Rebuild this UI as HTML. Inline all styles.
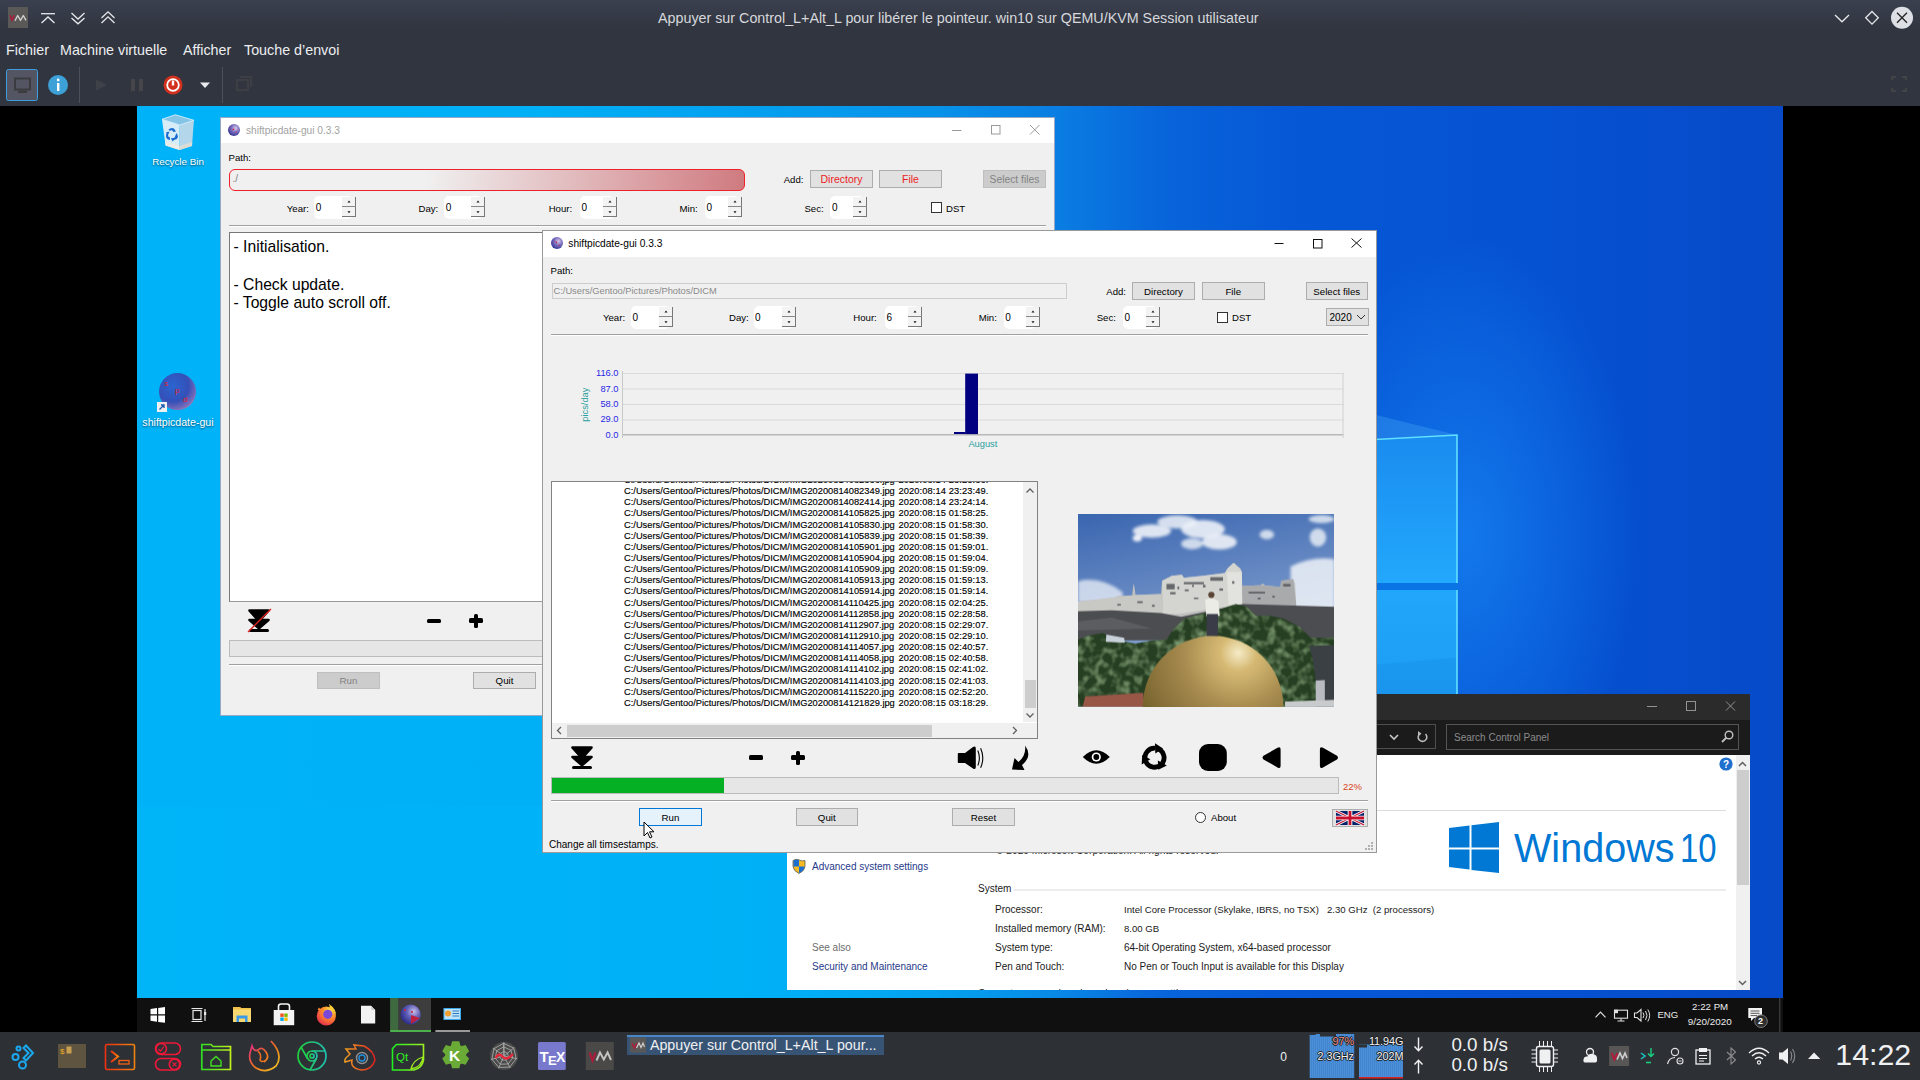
<!DOCTYPE html>
<html><head><meta charset="utf-8">
<style>
*{margin:0;padding:0;box-sizing:border-box}
html,body{width:1920px;height:1080px;overflow:hidden;background:#000;font-family:"Liberation Sans",sans-serif}
.a{position:absolute}
.t{position:absolute;white-space:nowrap;line-height:1}
svg{position:absolute;overflow:visible}
/* top chrome */
#titlebar{left:0;top:0;width:1920px;height:35px;background:linear-gradient(#3b4050 0px,#31353f 28px,#31353f 35px)}
#menubar{left:0;top:35px;width:1920px;height:30px;background:#31353f}
#toolbar{left:0;top:65px;width:1920px;height:41px;background:#31353f}
/* desktop */
#desk{left:137px;top:106px;width:1646px;height:892px;overflow:hidden;background:#0a66d8}
#wintb{left:137px;top:998px;width:1646px;height:34px;background:#101010}
#kde{left:0;top:1032px;width:1920px;height:48px;background:#2d3136}
.win{position:absolute;background:#f0f0f0;overflow:hidden}
.wt{font-family:"Liberation Sans",sans-serif;font-size:11px;color:#000}
.btn{position:absolute;background:#e1e1e1;border:1px solid #adadad;font-size:11px;text-align:center;color:#000}
.spin{position:absolute;background:#fff}
</style></head><body>

<!-- ============ TOP CHROME ============ -->
<div id="titlebar" class="a"></div>
<div id="menubar" class="a"></div>
<div id="toolbar" class="a"></div>
<div class="t" style="left:658px;top:10.5px;font-size:14.3px;color:#d6d8dc">Appuyer sur Control_L+Alt_L pour libérer le pointeur. win10 sur QEMU/KVM Session utilisateur</div>
<svg class="a" style="left:0;top:0" width="1920" height="106" viewBox="0 0 1920 106">
 <rect x="8" y="7" width="20" height="21" fill="#5b5957"/>
 <path d="M10.2 15.2 L12.1 20.8 L14 15.2" stroke="#a81c3c" stroke-width="1.6" stroke-linejoin="round" fill="none"/>
 <path d="M15 20.8 L17.7 15.5 L20.5 20.4 L23.3 15.5 L26 20.4" stroke="#cfcfcf" stroke-width="1.4" stroke-linejoin="round" fill="none"/>
 <g stroke="#e6e8ea" stroke-width="1.3" fill="none">
  <path d="M41 13.7 H55"/><path d="M41.5 23 L48 17 L54.5 23"/>
  <path d="M71.5 13 L78 19 L84.5 13"/><path d="M71.5 18 L78 23.8 L84.5 18"/>
  <path d="M101.5 18 L108 11.8 L114.5 18"/><path d="M101.5 23 L108 16.8 L114.5 23"/>
  <path d="M1835 15 L1842 21.8 L1849 15"/>
  <path d="M1872 11.5 L1878.3 17.8 L1872 24.1 L1865.7 17.8 Z"/>
 </g>
 <circle cx="1902" cy="17.8" r="11" fill="#dcdfe4"/>
 <path d="M1897 12.8 L1907 22.8 M1907 12.8 L1897 22.8" stroke="#222" stroke-width="1.3"/>
 <!-- toolbar -->
 <rect x="6.5" y="69.5" width="31" height="31" rx="2" fill="#535662" stroke="#3d9fe0" stroke-width="1"/>
 <rect x="15" y="78.5" width="15" height="11" fill="none" stroke="#3b3c40" stroke-width="2"/>
 <rect x="18" y="90.5" width="9" height="2.5" fill="#3b3c40"/>
 <circle cx="58" cy="85" r="10" fill="#3da1d8"/>
 <rect x="57" y="83" width="2.4" height="8" fill="#fff"/><circle cx="58.2" cy="80" r="1.4" fill="#fff"/>
 <rect x="79" y="67" width="1" height="36" fill="#4b5059"/>
 <path d="M96 79.5 L107 85 L96 90.5Z" fill="#3e4147"/>
 <rect x="131" y="79" width="4" height="12" fill="#46464a"/><rect x="139" y="79" width="4" height="12" fill="#46464a"/>
 <circle cx="173" cy="85" r="9.5" fill="#d2311f"/>
 <circle cx="173" cy="85" r="5.8" fill="none" stroke="#fff" stroke-width="1.8"/>
 <rect x="171.8" y="80.5" width="2.4" height="5" fill="#fff"/>
 <path d="M200 82.5 H210 L205 88Z" fill="#e8eaed"/>
 <rect x="222" y="67" width="1" height="36" fill="#4b5059"/>
 <rect x="237" y="80" width="11" height="10" fill="none" stroke="#3d3f45" stroke-width="2"/>
 <path d="M240 77 H251 V87" fill="none" stroke="#3d3f45" stroke-width="2"/>
 <path d="M1892 80 V77 H1896 M1902 77 H1906 V80 M1906 88 V91 H1902 M1896 91 H1892 V88" fill="none" stroke="#4a4a48" stroke-width="1.5"/>
</svg>
<div class="t" style="left:6px;top:43px;font-size:14.3px;color:#eceef0">Fichier</div>
<div class="t" style="left:60px;top:43px;font-size:14.3px;color:#eceef0">Machine virtuelle</div>
<div class="t" style="left:183px;top:43px;font-size:14.3px;color:#eceef0">Afficher</div>
<div class="t" style="left:244px;top:43px;font-size:14.3px;color:#eceef0">Touche d’envoi</div>

<!-- ============ DESKTOP ============ -->
<div id="desk" class="a">
 <div class="a" style="left:0;top:0;width:1646px;height:892px;background:linear-gradient(90deg,#00b3f8 0px,#00b0f6 400px,#0892ea 800px,#0a7ee2 917px,#0864da 1030px,#0658d6 1150px,#0552d2 1400px,#064ac8 1646px)"></div>
 <div class="a" style="left:0;top:0;width:1646px;height:892px;background:radial-gradient(ellipse 170px 300px at 1330px 430px,rgba(30,150,255,.55),rgba(30,150,255,0) 100%)"></div>
 <div class="a" style="left:0;top:700px;width:1000px;height:192px;background:linear-gradient(90deg,#00b4f8,#00b1f6 60%,rgba(0,177,246,0))"></div>
 <svg width="1646" height="892" style="left:0;top:0">
  <defs>
   <linearGradient id="pane1" x1="0" y1="0" x2="0" y2="1"><stop offset="0" stop-color="#1a8cf0"/><stop offset="1" stop-color="#22a8fc"/></linearGradient>
   <linearGradient id="pane2" x1="0" y1="0" x2="0" y2="1"><stop offset="0" stop-color="#20a6fa"/><stop offset="1" stop-color="#1c9cf4"/></linearGradient>
  </defs>
  <path d="M1000 250 L1320 329 L1240 340Z" fill="rgba(90,190,255,.25)"/>
  <path d="M1100 341 L1320 329 L1320 477 L1100 477Z" fill="url(#pane1)"/>
  <rect x="1100" y="477" width="220" height="7" fill="#0a74e4"/>
  <path d="M1100 484 L1320 484 L1320 600 L1100 600Z" fill="url(#pane2)"/>
  <path d="M1100 570 L1320 552 L1320 600 L1100 600Z" fill="rgba(0,60,160,.08)"/>
  <path d="M1100 341 L1320 329 L1320 477" fill="none" stroke="#60e0ff" stroke-width="1.6"/>
  <path d="M1320 484 L1320 600" fill="none" stroke="#60e0ff" stroke-width="1.6"/>
 </svg>
</div>

<!--DI-->
<svg class="a" style="left:150px;top:110px" width="60" height="44" viewBox="150 110 60 44"><path d="M162 119.3 L179.7 125 L179.5 150.1 L165.6 145.4Z" fill="#d6ecf6"/><path d="M179.7 125 L193.9 120.3 L192 145.9 L179.5 150.1Z" fill="#b4d6ea"/><path d="M162 119.3 L175.4 114.8 L193.9 120.3 L179.7 125Z" fill="#86c4e6" stroke="#e4f4fc" stroke-width=".8"/><path d="M165 141 L179.5 146 L179.5 150.1 L165.6 145.4Z" fill="#ecebe6"/><path d="M179.5 146 L192.2 142 L192 145.9 L179.5 150.1Z" fill="#dcdcd6"/><g fill="#1a6cd0"><path d="M168.5 129.5 Q171 127 174 128.5 L176 131.5 L173.5 132 L172 130.3 Q170.5 129.8 169.8 131Z"/><path d="M166.5 132 L169.5 131.8 L168 135 Q168 137 170 137.5 L170 140 Q166 139.5 166 136Z"/><path d="M176.8 133 L178 136.5 Q177.5 139.5 174 140 L172.5 141.5 L171 138.3 L173.5 138 Q175.5 137.5 175.3 135.5Z"/></g></svg>
<div class="t" style="left:140px;width:76px;text-align:center;top:157.3px;font-size:9.8px;color:#fff;text-shadow:0 1px 2px rgba(0,0,0,.6)">Recycle Bin</div>
<svg class="a" style="left:155px;top:370px" width="46" height="46" viewBox="155 370 46 46"><defs><radialGradient id="dsg" cx=".38" cy=".35" r=".85"><stop offset="0" stop-color="#2c64d0"/><stop offset=".5" stop-color="#3450b8"/><stop offset=".75" stop-color="#7a6cb8"/><stop offset="1" stop-color="#d8a8d8"/></radialGradient></defs><circle cx="177.5" cy="391.6" r="18.5" fill="url(#dsg)"/><text x="164.5" y="386" font-family="Liberation Sans" font-size="7" fill="#e82020">s</text><text x="175" y="393" font-family="Liberation Sans" font-size="8" fill="#e82020">p</text><text x="183" y="402" font-family="Liberation Sans" font-size="8" fill="#e82020">d</text><rect x="157" y="402" width="10" height="10" fill="#f0f0f0"/><path d="M159.5 409.5 L164 405 M161 405 H164 V408" fill="none" stroke="#1a5ab0" stroke-width="1.3"/></svg>
<div class="t" style="left:130px;width:96px;text-align:center;top:417.0px;font-size:10.6px;color:#fff;text-shadow:0 1px 2px rgba(0,0,0,.6)">shiftpicdate-gui</div>
<!--/DI-->
<!-- ============ CONTROL PANEL ============ -->
<div class="a" style="left:787px;top:694px;width:963px;height:296px;background:#fff;overflow:hidden">
 <div class="a" style="left:0;top:0;width:963px;height:26px;background:#2b2b2b"></div>
 <div class="a" style="left:0;top:26px;width:963px;height:35px;background:#1b1b1b"></div>
 <div class="a" style="left:-1px;top:30px;width:650px;height:25px;border:1px solid #4e4e4e"></div>
 <div class="a" style="left:659px;top:30px;width:293px;height:26px;border:1px solid #555"></div>
 <div class="t" style="left:667px;top:38.5px;font-size:10px;color:#8c8c8c">Search Control Panel</div>
 <svg width="963" height="296" style="left:0;top:0">
  <g stroke="#929292" stroke-width="1" fill="none">
   <path d="M860 12.5 H870"/>
   <rect x="899.5" y="7.5" width="9" height="9"/>
   <path d="M939 7.5 L948 16.5 M948 7.5 L939 16.5"/>
  </g>
  <path d="M603 41 L607 45 L611 41" stroke="#c8c8c8" stroke-width="1.6" fill="none"/>
  <path d="M638.5 40 A4.3 4.3 0 1 1 633 39.6" stroke="#bcbcbc" stroke-width="1.6" fill="none"/>
  <path d="M631 37 L634.5 39.8 L631 42" fill="#bcbcbc"/>
  <circle cx="942" cy="41" r="3.8" stroke="#c0c0c0" stroke-width="1.4" fill="none"/>
  <path d="M939.5 43.5 L935 48" stroke="#c0c0c0" stroke-width="1.8"/>
  <circle cx="939" cy="70" r="6.6" fill="#1f6fcf"/>
  <text x="939" y="74" font-family="Liberation Sans" font-weight="bold" font-size="10" fill="#fff" text-anchor="middle">?</text>
  <rect x="949" y="61" width="14" height="235" fill="#f0f0f0"/>
  <rect x="950" y="76" width="12" height="115" fill="#cdcdcd"/>
  <path d="M952 72 L955.5 68.5 L959 72" stroke="#606060" stroke-width="1.5" fill="none"/>
  <path d="M952 287 L955.5 290.5 L959 287" stroke="#606060" stroke-width="1.5" fill="none"/>
  <rect x="0" y="116" width="939" height="1" fill="#dcdcdc"/>
  <rect x="227" y="195.5" width="712" height="1" fill="#dcdcdc"/>
  <!-- windows logo -->
  <path d="M662 134 L682.5 131.6 L682.5 153.4 L662 153.4Z M684.5 131.3 L712 128 L712 153.4 L684.5 153.4Z M662 155.4 L682.5 155.4 L682.5 175.6 L662 173Z M684.5 155.4 L712 155.4 L712 179 L684.5 175.9Z" fill="#0078d4"/>
  <!-- shield -->
  <g transform="translate(-6,0)"><path d="M12 166.5 Q15 164.5 18.5 166 Q21 167.5 24 166.5 L24 172.5 Q23.5 177 18 179.5 Q12.5 177 12 172.5Z" fill="#f6bb22" stroke="#5a5a5a" stroke-width=".8"/>
  <path d="M18 166 Q15 164.8 12.4 166.4 L12.4 172.5 L18 172.5Z M18 172.5 L23.6 172.5 Q23.2 176.8 18 179.2Z" fill="#1c6fd0"/></g>
 </svg>
 <div class="t" style="left:727px;top:134px;font-size:41px;color:#0078d4;transform:scaleX(.965);transform-origin:0 0">Windows</div><div class="t" style="left:893px;top:134px;font-size:41px;color:#0078d4;transform:scaleX(.8);transform-origin:0 0">10</div>
 <div class="t" style="left:209px;top:151.5px;font-size:10.2px;color:#222">© 2020 Microsoft Corporation. All rights reserved.</div>
 <div class="t" style="left:25px;top:168px;font-size:10px;color:#1f3a8a">Advanced system settings</div>
 <div class="t" style="left:191px;top:189.5px;font-size:10px;color:#1a1a1a">System</div>
 <div class="t" style="left:208px;top:211px;font-size:10px;color:#1a1a1a">Processor:</div>
 <div class="t" style="left:208px;top:230px;font-size:10px;color:#1a1a1a">Installed memory (RAM):</div>
 <div class="t" style="left:208px;top:248.5px;font-size:10px;color:#1a1a1a">System type:</div>
 <div class="t" style="left:208px;top:267.5px;font-size:10px;color:#1a1a1a">Pen and Touch:</div>
 <div class="t" style="left:337px;top:211px;font-size:9.6px;color:#1a1a1a">Intel Core Processor (Skylake, IBRS, no TSX) &nbsp; 2.30 GHz &nbsp;(2 processors)</div>
 <div class="t" style="left:337px;top:230px;font-size:9.6px;color:#1a1a1a">8.00 GB</div>
 <div class="t" style="left:337px;top:248.5px;font-size:10px;color:#1a1a1a">64-bit Operating System, x64-based processor</div>
 <div class="t" style="left:337px;top:267.5px;font-size:10px;color:#1a1a1a">No Pen or Touch Input is available for this Display</div>
 <div class="t" style="left:25px;top:248.5px;font-size:10px;color:#6d6d6d">See also</div>
 <div class="t" style="left:25px;top:267.5px;font-size:10px;color:#1f3a8a">Security and Maintenance</div>
 <div class="t" style="left:191px;top:295px;font-size:10px;color:#1a1a1a">Computer name, domain and workgroup settings</div>
</div>

<!-- ============ WINDOW 1 ============ -->
<!--W1-->
<div class="a" style="left:220px;top:117px;width:835px;height:599px;background:#f0f0f0;border:1px solid rgba(40,80,140,.45);overflow:hidden">
</div>
<div class="a" style="left:221px;top:118px;width:833px;height:25px;background:#fff"></div>
<svg class="a" style="left:227.4px;top:122.80000000000001px" width="14" height="14" viewBox="-7 -7 14 14"><defs><radialGradient id="sg234" cx="0.62" cy="0.35" r="0.75"><stop offset="0" stop-color="#d8c8e8"/><stop offset=".45" stop-color="#7a70c0"/><stop offset="1" stop-color="#2a2a8a"/></radialGradient></defs><circle r="6" fill="url(#sg234)"/><circle cx="-0.6000000000000001" cy="-0.6000000000000001" r="0.78" fill="#d02040"/><circle cx="2.0999999999999996" cy="2.0999999999999996" r="0.66" fill="#d02040"/><circle cx="-2.7" cy="-2.0999999999999996" r="0.48" fill="#d02040"/></svg>
<div class="t" style="left:246.0px;top:126.1px;font-size:10.2px;color:#a2a2a2;">shiftpicdate-gui 0.3.3</div>
<svg class="a" style="left:940px;top:118px" width="114" height="25"><g stroke="#9a9a9a" stroke-width="1" fill="none"><path d="M12 12.5 H21.5"/><rect x="51.5" y="7.5" width="8.5" height="8.5"/><path d="M90 7 L99.5 16.5 M99.5 7 L90 16.5"/></g></svg>
<div class="t" style="left:228.5px;top:152.7px;font-size:9.6px;color:#000;">Path:</div>
<div class="a" style="left:229px;top:168.5px;width:516px;height:22px;border:1px solid #f0202a;border-radius:6px;background:linear-gradient(95deg,#f0f0f0 0%,#f0f0f0 38%,#e4c4c6 62%,#d8979b 85%,#cf7b80 100%)"></div>
<div class="t" style="left:232.5px;top:174.0px;font-size:10px;color:#808080;">./</div>
<div class="t" style="left:783.7px;top:174.9px;font-size:9.6px;color:#000;">Add:</div>
<div class="a" style="left:810px;top:170px;width:63px;height:18px;background:#e1e1e1;border:1px solid #adadad"></div>
<div class="t" style="left:810px;width:63px;text-align:center;top:174.3px;font-size:10.5px;color:#ec1c24">Directory</div>
<div class="a" style="left:879px;top:170px;width:63px;height:18px;background:#e1e1e1;border:1px solid #adadad"></div>
<div class="t" style="left:879px;width:63px;text-align:center;top:174.3px;font-size:10.5px;color:#ec1c24">File</div>
<div class="a" style="left:983px;top:170px;width:63px;height:18px;background:#cccccc;border:1px solid #bfbfbf"></div>
<div class="t" style="left:983px;width:63px;text-align:center;top:174.5px;font-size:10.3px;color:#838383">Select files</div>
<div class="t" style="left:286.8px;top:203.9px;font-size:9.6px;color:#000;">Year:</div>
<div class="a" style="left:314.3px;top:196.3px;width:38.69999999999999px;height:22.5px;background:#fff;border-radius:5px"></div>
<div class="a" style="left:342px;top:197.3px;width:14px;height:20px;background:#f3f3f3;border-right:1px solid #777;"></div>
<div class="a" style="left:342px;top:206.3px;width:14px;height:1px;background:#888"></div>
<div class="a" style="left:342px;top:216.3px;width:14px;height:1px;background:#777"></div>
<svg class="a" style="left:342px;top:196.3px" width="14" height="22"><path d="M5.5 6.5 L7 4.6 L8.5 6.5Z M5.5 15.3 L7 17.2 L8.5 15.3Z" fill="#111"/></svg>
<div class="t" style="left:315.8px;top:203.1px;font-size:10px;color:#000;">0</div>
<div class="t" style="left:418.5px;top:203.9px;font-size:9.6px;color:#000;">Day:</div>
<div class="a" style="left:444.3px;top:196.3px;width:37.69999999999999px;height:22.5px;background:#fff;border-radius:5px"></div>
<div class="a" style="left:471px;top:197.3px;width:14px;height:20px;background:#f3f3f3;border-right:1px solid #777;"></div>
<div class="a" style="left:471px;top:206.3px;width:14px;height:1px;background:#888"></div>
<div class="a" style="left:471px;top:216.3px;width:14px;height:1px;background:#777"></div>
<svg class="a" style="left:471px;top:196.3px" width="14" height="22"><path d="M5.5 6.5 L7 4.6 L8.5 6.5Z M5.5 15.3 L7 17.2 L8.5 15.3Z" fill="#111"/></svg>
<div class="t" style="left:445.8px;top:203.1px;font-size:10px;color:#000;">0</div>
<div class="t" style="left:548.7px;top:203.9px;font-size:9.6px;color:#000;">Hour:</div>
<div class="a" style="left:580px;top:196.3px;width:34px;height:22.5px;background:#fff;border-radius:5px"></div>
<div class="a" style="left:603px;top:197.3px;width:14px;height:20px;background:#f3f3f3;border-right:1px solid #777;"></div>
<div class="a" style="left:603px;top:206.3px;width:14px;height:1px;background:#888"></div>
<div class="a" style="left:603px;top:216.3px;width:14px;height:1px;background:#777"></div>
<svg class="a" style="left:603px;top:196.3px" width="14" height="22"><path d="M5.5 6.5 L7 4.6 L8.5 6.5Z M5.5 15.3 L7 17.2 L8.5 15.3Z" fill="#111"/></svg>
<div class="t" style="left:581.5px;top:203.1px;font-size:10px;color:#000;">0</div>
<div class="t" style="left:679.6px;top:203.9px;font-size:9.6px;color:#000;">Min:</div>
<div class="a" style="left:705px;top:196.3px;width:34px;height:22.5px;background:#fff;border-radius:5px"></div>
<div class="a" style="left:728px;top:197.3px;width:14px;height:20px;background:#f3f3f3;border-right:1px solid #777;"></div>
<div class="a" style="left:728px;top:206.3px;width:14px;height:1px;background:#888"></div>
<div class="a" style="left:728px;top:216.3px;width:14px;height:1px;background:#777"></div>
<svg class="a" style="left:728px;top:196.3px" width="14" height="22"><path d="M5.5 6.5 L7 4.6 L8.5 6.5Z M5.5 15.3 L7 17.2 L8.5 15.3Z" fill="#111"/></svg>
<div class="t" style="left:706.5px;top:203.1px;font-size:10px;color:#000;">0</div>
<div class="t" style="left:804.4px;top:203.9px;font-size:9.6px;color:#000;">Sec:</div>
<div class="a" style="left:830.4px;top:196.3px;width:33.60000000000002px;height:22.5px;background:#fff;border-radius:5px"></div>
<div class="a" style="left:853px;top:197.3px;width:14px;height:20px;background:#f3f3f3;border-right:1px solid #777;"></div>
<div class="a" style="left:853px;top:206.3px;width:14px;height:1px;background:#888"></div>
<div class="a" style="left:853px;top:216.3px;width:14px;height:1px;background:#777"></div>
<svg class="a" style="left:853px;top:196.3px" width="14" height="22"><path d="M5.5 6.5 L7 4.6 L8.5 6.5Z M5.5 15.3 L7 17.2 L8.5 15.3Z" fill="#111"/></svg>
<div class="t" style="left:831.9px;top:203.1px;font-size:10px;color:#000;">0</div>
<div class="a" style="left:931px;top:202px;width:11px;height:11px;background:#fff;border:1px solid #333"></div>
<div class="t" style="left:946.0px;top:203.9px;font-size:9.6px;color:#000;">DST</div>
<div class="a" style="left:229px;top:225px;width:817px;height:1px;background:#a0a0a0"></div><div class="a" style="left:229px;top:226px;width:817px;height:1px;background:#fff"></div>
<div class="a" style="left:229px;top:232px;width:817px;height:370px;background:#fff;border-top:1px solid #777;border-left:1px solid #777;border-bottom:1px solid #999"></div>
<div class="t" style="left:233.5px;top:239.0px;font-size:15.7px;color:#000;">- Initialisation.</div>
<div class="t" style="left:233.5px;top:276.7px;font-size:15.7px;color:#000;">- Check update.</div>
<div class="t" style="left:233.5px;top:295.0px;font-size:15.7px;color:#000;">- Toggle auto scroll off.</div>
<svg class="a" style="left:248px;top:608.5px" width="24" height="24" viewBox="0 0 24 24"><path d="M1.5 1 Q0.5 1 1.2 2 L11 13 L20.8 2 Q21.5 1 20.5 1Z" fill="#000" stroke="#000" stroke-width="1.5" stroke-linejoin="round"/><path d="M1.5 10.5 Q0.5 10.5 1.2 11.5 L11 20 L20.8 11.5 Q21.5 10.5 20.5 10.5Z" fill="#000" stroke="#000" stroke-width="1.5" stroke-linejoin="round"/><rect x="1" y="20" width="20" height="3" rx="1.5" fill="#000"/><path d="M0 23 L23 0" stroke="#e02020" stroke-width="1.3"/></svg>
<div class="a" style="left:426.5px;top:618.5px;width:14px;height:4.5px;background:#000;border-radius:1.5px"></div>
<div class="a" style="left:468.7px;top:618.3px;width:14px;height:4.3px;background:#000;border-radius:1.5px"></div><div class="a" style="left:473.5px;top:613.5px;width:4.3px;height:14px;background:#000;border-radius:1.5px"></div>
<div class="a" style="left:229px;top:639.5px;width:817px;height:17.5px;background:#e6e6e6;border:1px solid #bcbcbc"></div>
<div class="a" style="left:229px;top:663.5px;width:817px;height:1px;background:#a0a0a0"></div><div class="a" style="left:229px;top:664.5px;width:817px;height:1px;background:#fff"></div>
<div class="a" style="left:317px;top:671.5px;width:63px;height:17.5px;background:#cccccc;border:1px solid #bfbfbf"></div>
<div class="t" style="left:317px;width:63px;text-align:center;top:676.2px;font-size:9.7px;color:#838383">Run</div>
<div class="a" style="left:473px;top:671.5px;width:63px;height:17.5px;background:#e1e1e1;border:1px solid #adadad"></div>
<div class="t" style="left:473px;width:63px;text-align:center;top:676.2px;font-size:9.7px;color:#000">Quit</div>
<!--/W1-->
<!-- ============ WINDOW 2 ============ -->
<!--W2-->
<div class="a" style="left:542px;top:230px;width:835px;height:623px;background:#f0f0f0;border:1px solid #9a9a9a"></div>
<div class="a" style="left:543px;top:231px;width:833px;height:26px;background:#fff"></div>
<svg class="a" style="left:549.8px;top:235.8px" width="14" height="14" viewBox="-7 -7 14 14"><defs><radialGradient id="sg556" cx="0.62" cy="0.35" r="0.75"><stop offset="0" stop-color="#d8c8e8"/><stop offset=".45" stop-color="#7a70c0"/><stop offset="1" stop-color="#2a2a8a"/></radialGradient></defs><circle r="6" fill="url(#sg556)"/><circle cx="-0.6000000000000001" cy="-0.6000000000000001" r="0.78" fill="#d02040"/><circle cx="2.0999999999999996" cy="2.0999999999999996" r="0.66" fill="#d02040"/><circle cx="-2.7" cy="-2.0999999999999996" r="0.48" fill="#d02040"/></svg>
<div class="t" style="left:568.3px;top:238.9px;font-size:10.2px;color:#000;">shiftpicdate-gui 0.3.3</div>
<svg class="a" style="left:1260px;top:231px" width="116" height="26"><g stroke="#111" stroke-width="1" fill="none"><path d="M14.5 12.5 H23.5"/><rect x="53.5" y="8.5" width="8.5" height="8.5"/><path d="M91.5 7.5 L101.5 16.5 M101.5 7.5 L91.5 16.5"/></g></svg>
<div class="t" style="left:550.5px;top:265.6px;font-size:9.6px;color:#000;">Path:</div>
<div class="a" style="left:551.5px;top:283px;width:515px;height:15.5px;background:#f0f0f0;border:1px solid #cdcdcd"></div>
<div class="t" style="left:553.5px;top:286.9px;font-size:9.3px;color:#8a8a8a;">C:/Users/Gentoo/Pictures/Photos/DICM</div>
<div class="t" style="left:1106.3px;top:286.6px;font-size:9.6px;color:#000;">Add:</div>
<div class="a" style="left:1132px;top:282.2px;width:63px;height:17.80000000000001px;background:#e1e1e1;border:1px solid #adadad"></div>
<div class="t" style="left:1132px;width:63px;text-align:center;top:287.1px;font-size:9.7px;color:#000">Directory</div>
<div class="a" style="left:1202px;top:282.2px;width:62.5px;height:17.80000000000001px;background:#e1e1e1;border:1px solid #adadad"></div>
<div class="t" style="left:1202px;width:62.5px;text-align:center;top:287.1px;font-size:9.7px;color:#000">File</div>
<div class="a" style="left:1305.5px;top:282.2px;width:62.5px;height:17.80000000000001px;background:#e1e1e1;border:1px solid #adadad"></div>
<div class="t" style="left:1305.5px;width:62.5px;text-align:center;top:287.1px;font-size:9.7px;color:#000">Select files</div>
<div class="t" style="left:603.0px;top:313.3px;font-size:9.6px;color:#000;">Year:</div>
<div class="a" style="left:631px;top:306.3px;width:38.5px;height:22.5px;background:#fff;border-radius:5px"></div>
<div class="a" style="left:658.5px;top:307.3px;width:14px;height:20px;background:#f3f3f3;border-right:1px solid #777;"></div>
<div class="a" style="left:658.5px;top:316.3px;width:14px;height:1px;background:#888"></div>
<div class="a" style="left:658.5px;top:326.3px;width:14px;height:1px;background:#777"></div>
<svg class="a" style="left:658.5px;top:306.3px" width="14" height="22"><path d="M5.5 6.5 L7 4.6 L8.5 6.5Z M5.5 15.3 L7 17.2 L8.5 15.3Z" fill="#111"/></svg>
<div class="t" style="left:632.5px;top:313.1px;font-size:10px;color:#000;">0</div>
<div class="t" style="left:729.0px;top:313.3px;font-size:9.6px;color:#000;">Day:</div>
<div class="a" style="left:753.5px;top:306.3px;width:39.5px;height:22.5px;background:#fff;border-radius:5px"></div>
<div class="a" style="left:782px;top:307.3px;width:14px;height:20px;background:#f3f3f3;border-right:1px solid #777;"></div>
<div class="a" style="left:782px;top:316.3px;width:14px;height:1px;background:#888"></div>
<div class="a" style="left:782px;top:326.3px;width:14px;height:1px;background:#777"></div>
<svg class="a" style="left:782px;top:306.3px" width="14" height="22"><path d="M5.5 6.5 L7 4.6 L8.5 6.5Z M5.5 15.3 L7 17.2 L8.5 15.3Z" fill="#111"/></svg>
<div class="t" style="left:755.0px;top:313.1px;font-size:10px;color:#000;">0</div>
<div class="t" style="left:853.3px;top:313.3px;font-size:9.6px;color:#000;">Hour:</div>
<div class="a" style="left:885px;top:306.3px;width:33.5px;height:22.5px;background:#fff;border-radius:5px"></div>
<div class="a" style="left:907.5px;top:307.3px;width:14px;height:20px;background:#f3f3f3;border-right:1px solid #777;"></div>
<div class="a" style="left:907.5px;top:316.3px;width:14px;height:1px;background:#888"></div>
<div class="a" style="left:907.5px;top:326.3px;width:14px;height:1px;background:#777"></div>
<svg class="a" style="left:907.5px;top:306.3px" width="14" height="22"><path d="M5.5 6.5 L7 4.6 L8.5 6.5Z M5.5 15.3 L7 17.2 L8.5 15.3Z" fill="#111"/></svg>
<div class="t" style="left:886.5px;top:313.1px;font-size:10px;color:#000;">6</div>
<div class="t" style="left:978.7px;top:313.3px;font-size:9.6px;color:#000;">Min:</div>
<div class="a" style="left:1003.8px;top:306.3px;width:32.700000000000045px;height:22.5px;background:#fff;border-radius:5px"></div>
<div class="a" style="left:1025.5px;top:307.3px;width:14px;height:20px;background:#f3f3f3;border-right:1px solid #777;"></div>
<div class="a" style="left:1025.5px;top:316.3px;width:14px;height:1px;background:#888"></div>
<div class="a" style="left:1025.5px;top:326.3px;width:14px;height:1px;background:#777"></div>
<svg class="a" style="left:1025.5px;top:306.3px" width="14" height="22"><path d="M5.5 6.5 L7 4.6 L8.5 6.5Z M5.5 15.3 L7 17.2 L8.5 15.3Z" fill="#111"/></svg>
<div class="t" style="left:1005.3px;top:313.1px;font-size:10px;color:#000;">0</div>
<div class="t" style="left:1096.7px;top:313.3px;font-size:9.6px;color:#000;">Sec:</div>
<div class="a" style="left:1123px;top:306.3px;width:33.5px;height:22.5px;background:#fff;border-radius:5px"></div>
<div class="a" style="left:1145.5px;top:307.3px;width:14px;height:20px;background:#f3f3f3;border-right:1px solid #777;"></div>
<div class="a" style="left:1145.5px;top:316.3px;width:14px;height:1px;background:#888"></div>
<div class="a" style="left:1145.5px;top:326.3px;width:14px;height:1px;background:#777"></div>
<svg class="a" style="left:1145.5px;top:306.3px" width="14" height="22"><path d="M5.5 6.5 L7 4.6 L8.5 6.5Z M5.5 15.3 L7 17.2 L8.5 15.3Z" fill="#111"/></svg>
<div class="t" style="left:1124.5px;top:313.1px;font-size:10px;color:#000;">0</div>
<div class="a" style="left:1217px;top:312px;width:11px;height:11px;background:#fff;border:1px solid #333"></div>
<div class="t" style="left:1232.0px;top:313.3px;font-size:9.6px;color:#000;">DST</div>
<div class="a" style="left:1326px;top:308px;width:42.5px;height:17.5px;background:#e1e1e1;border:1px solid #adadad"></div>
<div class="t" style="left:1329.5px;top:312.5px;font-size:10px;color:#000;">2020</div>
<svg class="a" style="left:1355px;top:312px" width="12" height="10"><path d="M2 3 L6 7 L10 3" stroke="#333" stroke-width="1" fill="none"/></svg>
<div class="a" style="left:551px;top:334px;width:817px;height:1px;background:#a0a0a0"></div><div class="a" style="left:551px;top:335px;width:817px;height:1px;background:#fff"></div>
<svg class="a" style="left:540px;top:360px" width="820" height="100" viewBox="540 360 820 100"><rect x="623" y="373.0" width="720.5" height="1" fill="#dadada"/><rect x="623" y="388.5" width="720.5" height="1" fill="#dadada"/><rect x="623" y="404.0" width="720.5" height="1" fill="#dadada"/><rect x="623" y="419.5" width="720.5" height="1" fill="#dadada"/><rect x="622" y="434" width="721.5" height="1.5" fill="#b8b8b8"/><rect x="622" y="371" width="1" height="67" fill="#c8c8c8"/><rect x="1342.5" y="373" width="1" height="65" fill="#d0d0d0"/><rect x="965.2" y="373.6" width="12.8" height="60.5" fill="#000080"/><rect x="954" y="432" width="11.5" height="2" fill="#000080"/></svg>
<div class="t" style="left:570px;width:48.5px;text-align:right;top:368.9px;font-size:9.3px;color:#2828e6">116.0</div>
<div class="t" style="left:570px;width:48.5px;text-align:right;top:384.6px;font-size:9.3px;color:#2828e6">87.0</div>
<div class="t" style="left:570px;width:48.5px;text-align:right;top:399.9px;font-size:9.3px;color:#2828e6">58.0</div>
<div class="t" style="left:570px;width:48.5px;text-align:right;top:415.3px;font-size:9.3px;color:#2828e6">29.0</div>
<div class="t" style="left:570px;width:48.5px;text-align:right;top:430.6px;font-size:9.3px;color:#2828e6">0.0</div>
<div class="t" style="left:566px;top:399.5px;width:40px;text-align:center;font-size:9.3px;color:#2aa0a0;transform:rotate(-90deg)">pics/day</div>
<div class="t" style="left:968.4px;top:440.3px;font-size:9.3px;color:#2aa0a0;">August</div>
<div class="a" style="left:551px;top:481px;width:486.5px;height:257.5px;background:#fff;border:1px solid #828282;overflow:hidden">
<div class="t" style="left:72px;top:-5.97px;font-size:9.3px;color:#000;-webkit-text-stroke:.15px #000">C:/Users/Gentoo/Pictures/Photos/DICM/IMG20200814082336.jpg<span style="position:absolute;left:274.5px;top:0;letter-spacing:.1px">2020:08:14 23:23:36.</span></div>
<div class="t" style="left:72px;top:5.17px;font-size:9.3px;color:#000;-webkit-text-stroke:.15px #000">C:/Users/Gentoo/Pictures/Photos/DICM/IMG20200814082349.jpg<span style="position:absolute;left:274.5px;top:0;letter-spacing:.1px">2020:08:14 23:23:49.</span></div>
<div class="t" style="left:72px;top:16.31px;font-size:9.3px;color:#000;-webkit-text-stroke:.15px #000">C:/Users/Gentoo/Pictures/Photos/DICM/IMG20200814082414.jpg<span style="position:absolute;left:274.5px;top:0;letter-spacing:.1px">2020:08:14 23:24:14.</span></div>
<div class="t" style="left:72px;top:27.45px;font-size:9.3px;color:#000;-webkit-text-stroke:.15px #000">C:/Users/Gentoo/Pictures/Photos/DICM/IMG20200814105825.jpg<span style="position:absolute;left:274.5px;top:0;letter-spacing:.1px">2020:08:15 01:58:25.</span></div>
<div class="t" style="left:72px;top:38.59px;font-size:9.3px;color:#000;-webkit-text-stroke:.15px #000">C:/Users/Gentoo/Pictures/Photos/DICM/IMG20200814105830.jpg<span style="position:absolute;left:274.5px;top:0;letter-spacing:.1px">2020:08:15 01:58:30.</span></div>
<div class="t" style="left:72px;top:49.73px;font-size:9.3px;color:#000;-webkit-text-stroke:.15px #000">C:/Users/Gentoo/Pictures/Photos/DICM/IMG20200814105839.jpg<span style="position:absolute;left:274.5px;top:0;letter-spacing:.1px">2020:08:15 01:58:39.</span></div>
<div class="t" style="left:72px;top:60.87px;font-size:9.3px;color:#000;-webkit-text-stroke:.15px #000">C:/Users/Gentoo/Pictures/Photos/DICM/IMG20200814105901.jpg<span style="position:absolute;left:274.5px;top:0;letter-spacing:.1px">2020:08:15 01:59:01.</span></div>
<div class="t" style="left:72px;top:72.01px;font-size:9.3px;color:#000;-webkit-text-stroke:.15px #000">C:/Users/Gentoo/Pictures/Photos/DICM/IMG20200814105904.jpg<span style="position:absolute;left:274.5px;top:0;letter-spacing:.1px">2020:08:15 01:59:04.</span></div>
<div class="t" style="left:72px;top:83.15px;font-size:9.3px;color:#000;-webkit-text-stroke:.15px #000">C:/Users/Gentoo/Pictures/Photos/DICM/IMG20200814105909.jpg<span style="position:absolute;left:274.5px;top:0;letter-spacing:.1px">2020:08:15 01:59:09.</span></div>
<div class="t" style="left:72px;top:94.29px;font-size:9.3px;color:#000;-webkit-text-stroke:.15px #000">C:/Users/Gentoo/Pictures/Photos/DICM/IMG20200814105913.jpg<span style="position:absolute;left:274.5px;top:0;letter-spacing:.1px">2020:08:15 01:59:13.</span></div>
<div class="t" style="left:72px;top:105.43px;font-size:9.3px;color:#000;-webkit-text-stroke:.15px #000">C:/Users/Gentoo/Pictures/Photos/DICM/IMG20200814105914.jpg<span style="position:absolute;left:274.5px;top:0;letter-spacing:.1px">2020:08:15 01:59:14.</span></div>
<div class="t" style="left:72px;top:116.57px;font-size:9.3px;color:#000;-webkit-text-stroke:.15px #000">C:/Users/Gentoo/Pictures/Photos/DICM/IMG20200814110425.jpg<span style="position:absolute;left:274.5px;top:0;letter-spacing:.1px">2020:08:15 02:04:25.</span></div>
<div class="t" style="left:72px;top:127.71px;font-size:9.3px;color:#000;-webkit-text-stroke:.15px #000">C:/Users/Gentoo/Pictures/Photos/DICM/IMG20200814112858.jpg<span style="position:absolute;left:274.5px;top:0;letter-spacing:.1px">2020:08:15 02:28:58.</span></div>
<div class="t" style="left:72px;top:138.85px;font-size:9.3px;color:#000;-webkit-text-stroke:.15px #000">C:/Users/Gentoo/Pictures/Photos/DICM/IMG20200814112907.jpg<span style="position:absolute;left:274.5px;top:0;letter-spacing:.1px">2020:08:15 02:29:07.</span></div>
<div class="t" style="left:72px;top:149.99px;font-size:9.3px;color:#000;-webkit-text-stroke:.15px #000">C:/Users/Gentoo/Pictures/Photos/DICM/IMG20200814112910.jpg<span style="position:absolute;left:274.5px;top:0;letter-spacing:.1px">2020:08:15 02:29:10.</span></div>
<div class="t" style="left:72px;top:161.13px;font-size:9.3px;color:#000;-webkit-text-stroke:.15px #000">C:/Users/Gentoo/Pictures/Photos/DICM/IMG20200814114057.jpg<span style="position:absolute;left:274.5px;top:0;letter-spacing:.1px">2020:08:15 02:40:57.</span></div>
<div class="t" style="left:72px;top:172.27px;font-size:9.3px;color:#000;-webkit-text-stroke:.15px #000">C:/Users/Gentoo/Pictures/Photos/DICM/IMG20200814114058.jpg<span style="position:absolute;left:274.5px;top:0;letter-spacing:.1px">2020:08:15 02:40:58.</span></div>
<div class="t" style="left:72px;top:183.41px;font-size:9.3px;color:#000;-webkit-text-stroke:.15px #000">C:/Users/Gentoo/Pictures/Photos/DICM/IMG20200814114102.jpg<span style="position:absolute;left:274.5px;top:0;letter-spacing:.1px">2020:08:15 02:41:02.</span></div>
<div class="t" style="left:72px;top:194.55px;font-size:9.3px;color:#000;-webkit-text-stroke:.15px #000">C:/Users/Gentoo/Pictures/Photos/DICM/IMG20200814114103.jpg<span style="position:absolute;left:274.5px;top:0;letter-spacing:.1px">2020:08:15 02:41:03.</span></div>
<div class="t" style="left:72px;top:205.69px;font-size:9.3px;color:#000;-webkit-text-stroke:.15px #000">C:/Users/Gentoo/Pictures/Photos/DICM/IMG20200814115220.jpg<span style="position:absolute;left:274.5px;top:0;letter-spacing:.1px">2020:08:15 02:52:20.</span></div>
<div class="t" style="left:72px;top:216.83px;font-size:9.3px;color:#000;-webkit-text-stroke:.15px #000">C:/Users/Gentoo/Pictures/Photos/DICM/IMG20200814121829.jpg<span style="position:absolute;left:274.5px;top:0;letter-spacing:.1px">2020:08:15 03:18:29.</span></div>
</div>
<div class="a" style="left:1023px;top:482px;width:13.5px;height:240px;background:#f0f0f0"></div>
<div class="a" style="left:1024.5px;top:680px;width:11px;height:28px;background:#cdcdcd"></div>
<div class="a" style="left:552px;top:722.5px;width:485px;height:15.5px;background:#f0f0f0"></div>
<div class="a" style="left:567px;top:724.5px;width:365px;height:12px;background:#cdcdcd"></div>
<svg class="a" style="left:550px;top:480px" width="490" height="260" viewBox="550 480 490 260"><g stroke="#606060" stroke-width="1.3" fill="none"><path d="M1026.5 492.5 L1030 489 L1033.5 492.5"/><path d="M1026.5 713.5 L1030 717 L1033.5 713.5"/><path d="M561 727 L557.5 730.5 L561 734"/><path d="M1013 727 L1016.5 730.5 L1013 734"/></g></svg>
<svg class="a" style="left:1077.7px;top:514.2px;overflow:hidden" width="256.7" height="192.7" viewBox="15 12 1407 1056" preserveAspectRatio="none">
<defs>
 <linearGradient id="sky" x1="0" y1="0" x2="0.25" y2="1"><stop offset="0" stop-color="#3a66b0"/><stop offset=".5" stop-color="#6a8cc4"/><stop offset="1" stop-color="#a6bcdc"/></linearGradient>
 <radialGradient id="gold" cx="0.68" cy="0.12" r="0.8"><stop offset="0" stop-color="#f6ecc8"/><stop offset=".16" stop-color="#d6ba74"/><stop offset=".5" stop-color="#a68a4e"/><stop offset="1" stop-color="#74602c"/></radialGradient>
 <filter id="bl" x="-20%" y="-20%" width="140%" height="140%"><feGaussianBlur stdDeviation="10"/></filter>
 <filter id="bl2"><feGaussianBlur stdDeviation="5"/></filter>
 <filter id="tex" x="0" y="0" width="100%" height="100%"><feTurbulence type="fractalNoise" baseFrequency="0.02" numOctaves="2" seed="3"/><feColorMatrix values="0 0 0 0 0.33  0 0 0 0 0.50  0 0 0 0 0.27  0 0 0 -2.5 1.45"/><feComposite in2="SourceGraphic" operator="in"/></filter>
</defs>
<rect x="15" y="12" width="1407" height="1056" fill="url(#sky)"/>
<g filter="url(#bl)" fill="#eef2f8">
 <path d="M1180 300 Q1300 240 1422 260 L1422 540 L1180 540Z" opacity=".85"/>
 <path d="M15 380 Q140 350 260 440 L260 500 L15 500Z" opacity=".75"/>
 <ellipse cx="420" cy="105" rx="105" ry="36" opacity=".9"/><ellipse cx="560" cy="55" rx="110" ry="36" opacity=".85"/><ellipse cx="700" cy="95" rx="120" ry="50" opacity=".9"/>
 <ellipse cx="790" cy="165" rx="95" ry="42" opacity=".9"/><ellipse cx="640" cy="175" rx="60" ry="30" opacity=".8"/><ellipse cx="340" cy="145" rx="25" ry="18"/>
 <ellipse cx="1050" cy="125" rx="40" ry="26" opacity=".8"/><ellipse cx="1330" cy="140" rx="45" ry="50" opacity=".8"/><ellipse cx="1350" cy="40" rx="70" ry="22" opacity=".8"/>
</g>
<!-- castle -->
<path d="M15 492 L90 485 L210 470 L235 462 L312 458 L316 420 L320 392 L326 420 L330 455 L470 450 L476 378 L530 350 L585 345 L595 362 L700 350 L820 336 L835 310 L860 292 L868 278 L880 292 L905 312 L913 330 L915 405 L1015 402 L1028 393 L1040 403 L1125 412 L1128 378 L1195 368 L1205 395 L1212 520 L1280 525 L1422 520 L1422 600 L15 600Z" fill="#bfc0be"/>
<path d="M476 378 L530 350 L585 345 L595 362 L700 350 L820 336 L835 310 L868 278 L905 312 L913 330 L915 505 L570 560 L480 560Z" fill="#d4d4d0"/>
<path d="M15 492 L210 470 L320 458 L470 450 L480 560 L15 555Z" fill="#c8c8c4"/>
<path d="M915 405 L1015 402 L1125 412 L1128 378 L1195 368 L1212 520 L915 515Z" fill="#a9aaac"/>
<path d="M830 330 L912 330 L915 505 L840 510Z" fill="#e2e2de"/>
<g fill="#55565a" opacity=".85">
 <rect x="595" y="385" width="110" height="12"/><rect x="500" y="395" width="45" height="30"/><rect x="740" y="358" width="70" height="20"/>
 <rect x="600" y="425" width="22" height="10"/><rect x="520" y="440" width="30" height="12"/><rect x="230" y="505" width="20" height="9"/>
 <rect x="950" y="438" width="90" height="10"/><rect x="1140" y="395" width="40" height="14"/><rect x="340" y="490" width="30" height="10"/>
 <rect x="790" y="420" width="20" height="12"/><rect x="650" y="470" width="25" height="8"/><rect x="700" y="400" width="14" height="14"/>
 <rect x="560" y="410" width="10" height="14"/><rect x="640" y="400" width="10" height="12"/><rect x="860" y="380" width="12" height="14"/>
 <rect x="1000" y="470" width="16" height="10"/><rect x="1080" y="460" width="14" height="10"/><rect x="420" y="510" width="16" height="10"/>
</g>
<path d="M15 545 L200 540 L470 555 L580 575 L920 505 L1422 520 L1422 700 L15 705Z" fill="#4c4d50"/>
<path d="M15 600 L200 580 L420 640 L15 650Z" fill="#626466" opacity=".7"/>
<!-- trees -->
<path d="M15 700 L70 680 L150 665 L240 705 L330 722 L420 705 L500 700 L540 640 L600 585 L690 560 L760 545 L880 505 L940 520 L990 570 L1060 568 L1140 585 L1230 630 L1290 690 L1422 690 L1422 1068 L15 1068Z" fill="#263f22"/>
<path d="M15 700 L70 680 L150 665 L240 705 L330 722 L420 705 L500 700 L540 640 L600 585 L690 560 L760 545 L880 505 L940 520 L990 570 L1060 568 L1140 585 L1230 630 L1290 690 L1422 690 L1422 1068 L15 1068Z" fill="#fff" filter="url(#tex)" opacity=".7"/>
<path d="M170 672 L268 690 L272 718 L168 712Z" fill="#c8d0da"/>
<path d="M1282 735 L1422 730 L1422 1068 L1318 1068 Q1330 880 1282 735Z" fill="#3a4044"/>
<path d="M1318 925 L1368 922 L1368 1050 L1318 1050Z" fill="#b8bcc0"/>
<path d="M1150 1040 L1422 1030 L1422 1068 L1150 1068Z" fill="#c8cacc"/>
<path d="M55 1012 L372 992 L380 1068 L40 1068Z" fill="#985646"/>
<circle cx="755" cy="1065" r="385" fill="url(#gold)"/>
<path d="M712 482 Q745 462 785 488 L792 570 L718 572Z" fill="#ecece6"/>
<path d="M720 560 L782 560 L782 680 L720 680Z" fill="#3a3c48"/>
<circle cx="746" cy="455" r="17" fill="#5a4434"/>
</svg>
<svg class="a" style="left:570.5px;top:745.5px" width="24" height="24" viewBox="0 0 24 24"><path d="M1.5 1 Q0.5 1 1.2 2 L11 13 L20.8 2 Q21.5 1 20.5 1Z" fill="#000" stroke="#000" stroke-width="1.5" stroke-linejoin="round"/><path d="M1.5 10.5 Q0.5 10.5 1.2 11.5 L11 20 L20.8 11.5 Q21.5 10.5 20.5 10.5Z" fill="#000" stroke="#000" stroke-width="1.5" stroke-linejoin="round"/><rect x="1" y="20" width="20" height="3" rx="1.5" fill="#000"/></svg>
<div class="a" style="left:749px;top:755.3px;width:14px;height:4.5px;background:#000;border-radius:1.5px"></div>
<div class="a" style="left:791px;top:755.4px;width:14px;height:4.3px;background:#000;border-radius:1.5px"></div><div class="a" style="left:795.8px;top:750.6px;width:4.3px;height:14px;background:#000;border-radius:1.5px"></div>
<svg class="a" style="left:950px;top:740px" width="400" height="36" viewBox="950 740 400 36"><path d="M958.5 753 Q957.8 753 957.8 754 L957.8 762 Q957.8 763 958.5 763 L965 763 L973 768.5 Q975.8 770 975.8 767 L975.8 748.5 Q975.8 745.5 973 747 L965 753Z" fill="#000"/><path d="M977.8 750.5 Q981 758 977.8 765.5 M980.6 748.3 Q985 758 980.6 767.7" stroke="#000" stroke-width="1.1" fill="none"/><path d="M1025 745.5 Q1033 756 1022 765 L1024.5 770 L1012 769.5 L1014.5 758 L1018.5 762 Q1026.5 755 1025 745.5Z" fill="#000"/><path d="M1082.8 757 Q1096.3 743.5 1109.8 757 Q1096.3 770.5 1082.8 757Z" fill="#000"/><circle cx="1096.3" cy="757" r="4.6" fill="#fff"/><circle cx="1096.3" cy="757" r="2.9" fill="#000"/><g transform="translate(1154.5,757.7)"><g transform="rotate(0)"><path d="M-9 3 A9.5 9.5 0 0 1 1 -9.5" stroke="#000" stroke-width="4.8" fill="none"/><path d="M0.5 -14.5 L8.5 -9.3 L0.8 -4.3Z" fill="#000"/></g><g transform="rotate(120)"><path d="M-9 3 A9.5 9.5 0 0 1 1 -9.5" stroke="#000" stroke-width="4.8" fill="none"/><path d="M0.5 -14.5 L8.5 -9.3 L0.8 -4.3Z" fill="#000"/></g><g transform="rotate(240)"><path d="M-9 3 A9.5 9.5 0 0 1 1 -9.5" stroke="#000" stroke-width="4.8" fill="none"/><path d="M0.5 -14.5 L8.5 -9.3 L0.8 -4.3Z" fill="#000"/></g></g><rect x="1199" y="744" width="27.8" height="27" rx="9" fill="#000"/><path d="M1280.6 749.5 Q1280.6 746 1277.5 747.8 L1263.5 755.8 Q1261.5 757.6 1263.5 759.4 L1277.5 767.4 Q1280.6 769.2 1280.6 765.7Z" fill="#000"/><path d="M1319.9 749.5 Q1319.9 746 1323 747.8 L1337 755.8 Q1339 757.6 1337 759.4 L1323 767.4 Q1319.9 769.2 1319.9 765.7Z" fill="#000"/></svg>
<div class="a" style="left:551px;top:776.5px;width:788px;height:17.5px;background:#e6e6e6;border:1px solid #bcbcbc"></div>
<div class="a" style="left:552px;top:777.5px;width:171.5px;height:15.5px;background:#06b025"></div>
<div class="t" style="left:1343.0px;top:781.7px;font-size:9.5px;color:#d8441a;">22%</div>
<div class="a" style="left:551px;top:800.3px;width:817px;height:1px;background:#a0a0a0"></div><div class="a" style="left:551px;top:801.3px;width:817px;height:1px;background:#fff"></div>
<div class="a" style="left:639px;top:808.3px;width:63px;height:17.700000000000045px;background:#e5f1fb;border:1px solid #0078d7"></div>
<div class="t" style="left:639px;width:63px;text-align:center;top:813.1px;font-size:9.7px;color:#000">Run</div>
<div class="a" style="left:795.5px;top:808.3px;width:62.5px;height:17.700000000000045px;background:#e1e1e1;border:1px solid #adadad"></div>
<div class="t" style="left:795.5px;width:62.5px;text-align:center;top:813.1px;font-size:9.7px;color:#000">Quit</div>
<div class="a" style="left:952px;top:808.3px;width:63px;height:17.700000000000045px;background:#e1e1e1;border:1px solid #adadad"></div>
<div class="t" style="left:952px;width:63px;text-align:center;top:813.1px;font-size:9.7px;color:#000">Reset</div>
<div class="a" style="left:1194.5px;top:811.5px;width:11.5px;height:11.5px;border-radius:50%;background:#fff;border:1px solid #333"></div>
<div class="t" style="left:1211.0px;top:813.1px;font-size:9.6px;color:#000;">About</div>
<div class="a" style="left:1332.3px;top:808.5px;width:35.5px;height:18px;background:#e1e1e1;border:1px solid #adadad"></div>
<svg class="a" style="left:1336px;top:810.5px" width="28" height="14" viewBox="0 0 60 30"><rect width="60" height="30" fill="#012169"/><path d="M0 0 L60 30 M60 0 L0 30" stroke="#fff" stroke-width="6"/><path d="M0 0 L60 30 M60 0 L0 30" stroke="#C8102E" stroke-width="2.5"/><path d="M30 0 V30 M0 15 H60" stroke="#fff" stroke-width="10"/><path d="M30 0 V30 M0 15 H60" stroke="#C8102E" stroke-width="6"/></svg>
<div class="t" style="left:549.0px;top:840.3px;font-size:10px;color:#000;">Change all timsestamps.</div>
<svg class="a" style="left:1364px;top:840px" width="12" height="12"><g fill="#b0b0b0"><rect x="7" y="2" width="2" height="2"/><rect x="4" y="5" width="2" height="2"/><rect x="7" y="5" width="2" height="2"/><rect x="1" y="8" width="2" height="2"/><rect x="4" y="8" width="2" height="2"/><rect x="7" y="8" width="2" height="2"/></g></svg>
<svg class="a" style="left:643px;top:821px" width="14" height="20"><path d="M1 1 L1 15 L4.5 11.5 L7 17 L9 16 L6.5 10.8 L11 10.8Z" fill="#fff" stroke="#000" stroke-width="1"/></svg>
<!--/W2-->
<!-- ============ WINDOWS TASKBAR ============ -->
<div id="wintb" class="a"></div>
<!--TB-->
<svg class="a" style="left:137px;top:998px" width="1646" height="34" viewBox="137 998 1646 34"><path d="M150.5 1009 L157 1008.1 L157 1014.3 L150.5 1014.3Z M158.2 1007.9 L165 1007 L165 1014.3 L158.2 1014.3Z M150.5 1015.5 L157 1015.5 L157 1021.7 L150.5 1020.8Z M158.2 1015.5 L165 1015.5 L165 1022.7 L158.2 1021.9Z" fill="#fff"/><g fill="none" stroke="#e8e8e8" stroke-width="1.2"><rect x="193" y="1010.5" width="8" height="9"/><path d="M191.5 1008.5 H202.5 M191.5 1021.5 H202.5"/><path d="M205 1009 V1021"/></g><rect x="204" y="1012" width="2.2" height="3" fill="#e8e8e8"/><path d="M233 1007 L240 1007 L241.5 1008 L251 1008 L251 1022 L233 1022Z" fill="#f0c048"/><path d="M233 1009.5 L251 1009.5 L251 1022 L233 1022Z" fill="#f8d870"/><path d="M236.5 1015.5 L247.5 1015.5 L247.5 1022 L245 1022 L245 1018.5 L239 1018.5 L239 1022 L236.5 1022Z" fill="#3a9ae8"/><path d="M273.7 1010 L294.2 1010 L294.2 1025.2 L273.7 1025.2Z" fill="#f4f4f4"/><path d="M278.5 1010 L278.5 1006.5 Q278.5 1004 281 1004 L287 1004 Q289.5 1004 289.5 1006.5 L289.5 1010" fill="none" stroke="#f4f4f4" stroke-width="1.6"/><rect x="280.3" y="1013.5" width="3.4" height="3.4" fill="#f25022"/><rect x="284.3" y="1013.5" width="3.4" height="3.4" fill="#7fba00"/><rect x="280.3" y="1017.5" width="3.4" height="3.4" fill="#00a4ef"/><rect x="284.3" y="1017.5" width="3.4" height="3.4" fill="#ffb900"/><defs><radialGradient id="ffg" cx=".7" cy=".2" r=".9"><stop offset="0" stop-color="#ffe14a"/><stop offset=".45" stop-color="#ff8a2a"/><stop offset="1" stop-color="#e22850"/></radialGradient></defs><circle cx="326.3" cy="1016" r="9.6" fill="url(#ffg)"/><path d="M329 1004 Q336.5 1009 336 1016 Q335 1010 330 1008Z" fill="#ffd23a"/><circle cx="327.8" cy="1014.3" r="4.6" fill="#7a48d8"/><path d="M317.5 1010 L319 1007.5 L321 1010 L323 1008 L324 1011Z" fill="#ff8a2a"/><path d="M361 1005.7 L371 1005.7 L375.2 1010 L375.2 1023.4 L361 1023.4Z" fill="#f2f2f2"/><path d="M371 1005.7 L371 1010 L375.2 1010" fill="#cfcfcf"/><rect x="390.2" y="998" width="40.8" height="34" fill="#3d3d3d"/><rect x="390.2" y="998" width="8" height="34" fill="#3f6a40"/><rect x="390.2" y="1030" width="40.8" height="2" fill="#4cb04c"/><defs><radialGradient id="tsg" cx=".65" cy=".35" r=".75"><stop offset="0" stop-color="#c8c0e8"/><stop offset=".45" stop-color="#6060b8"/><stop offset="1" stop-color="#252580"/></radialGradient></defs><circle cx="410.6" cy="1014.5" r="10" fill="url(#tsg)"/><path d="M411 1015 L420 1018 L411 1024Z" fill="#c02040"/><circle cx="405" cy="1010" r="1" fill="#d02040"/><circle cx="412" cy="1012" r="1" fill="#d02040"/><rect x="443.4" y="1008" width="17.6" height="12" fill="#3da8e8"/><rect x="444.5" y="1009" width="15.4" height="10" fill="#bfe4fa"/><circle cx="448" cy="1013.5" r="3" fill="#f0a030"/><path d="M452.5 1011 H459 M452.5 1013.5 H459 M452.5 1016 H459" stroke="#2a7ac0" stroke-width="1"/><rect x="435.4" y="1030" width="34.6" height="2" fill="#9a9a9a"/><path d="M1595.5 1017.3 L1600.5 1012 L1605.5 1017.3" fill="none" stroke="#e0e0e0" stroke-width="1.2"/><g fill="none" stroke="#e0e0e0" stroke-width="1.1"><rect x="1614.5" y="1010.2" width="13" height="8"/><path d="M1621 1018.2 V1021 M1617.5 1021 H1624.5"/></g><rect x="1614" y="1009.7" width="4" height="3.5" fill="#e0e0e0"/><path d="M1634.5 1013 H1637 L1641 1009.5 V1021 L1637 1017.5 H1634.5Z" fill="none" stroke="#e0e0e0" stroke-width="1.1"/><path d="M1643 1012.5 Q1645 1015.3 1643 1018 M1645.5 1011 Q1648.5 1015.3 1645.5 1020 M1647.8 1009.5 Q1651.5 1015.3 1647.8 1021.5" fill="none" stroke="#e0e0e0" stroke-width="1"/><path d="M1748.3 1008 H1762 V1018 H1754 L1751 1021 V1018 H1748.3Z" fill="#f4f4f4"/><path d="M1750.5 1011 H1759.5 M1750.5 1013.3 H1759.5 M1750.5 1015.6 H1757" stroke="#555" stroke-width="1"/><circle cx="1761" cy="1021.2" r="6.3" fill="#2e2e2e" stroke="#7a7a7a" stroke-width="1"/><rect x="1779.3" y="998" width="1" height="34" fill="#4a4a4a"/></svg>
<div class="t" style="left:1657.4px;top:1009.8px;font-size:9.6px;color:#ececec;">ENG</div>
<div class="t" style="left:1692.1px;top:1002.3px;font-size:9.7px;color:#ececec;">2:22 PM</div>
<div class="t" style="left:1687.7px;top:1017.1px;font-size:9.9px;color:#ececec;">9/20/2020</div>
<div class="t" style="left:1758.0px;top:1017.4px;font-size:9px;color:#fff;font-weight:bold">2</div>
<!--/TB-->

<!-- ============ KDE PANEL ============ -->
<div id="kde" class="a"></div>
<!--KDE-->
<svg class="a" style="left:0;top:1032px" width="1920" height="48" viewBox="0 1032 1920 48"><g fill="none" stroke="#1ba8ee" stroke-width="2"><circle cx="18.5" cy="1048.5" r="2"/><circle cx="15.5" cy="1057" r="3"/><circle cx="22.5" cy="1065" r="3.5"/><path d="M26 1045.5 L33 1053 L26 1060.5 L23.5 1058 L28.5 1053 L23.5 1048Z"/></g><rect x="58" y="1044" width="28" height="24" fill="#5e5440"/><text x="60" y="1054" font-family="Liberation Sans" font-size="8" fill="#f0b020">$</text><rect x="66.5" y="1046.5" width="5" height="7" fill="#c8a050"/><defs><linearGradient id="rg1" x1="0" x2="1"><stop offset="0" stop-color="#f03010"/><stop offset="1" stop-color="#f08010"/></linearGradient><linearGradient id="gg1" x1="0" x2="1"><stop offset="0" stop-color="#30e020"/><stop offset="1" stop-color="#c0f020"/></linearGradient><linearGradient id="ff1" x1="0" x2="1" y1="0" y2="1"><stop offset="0" stop-color="#e02090"/><stop offset=".5" stop-color="#f07020"/><stop offset="1" stop-color="#f0d020"/></linearGradient><linearGradient id="ch1" x1="0" x2="1"><stop offset="0" stop-color="#20d040"/><stop offset="1" stop-color="#20c0b0"/></linearGradient><linearGradient id="bl1" x1="0" x2="1"><stop offset="0" stop-color="#f0a020"/><stop offset="1" stop-color="#e02020"/></linearGradient><linearGradient id="qt1" x1="0" x2="1"><stop offset="0" stop-color="#20f020"/><stop offset="1" stop-color="#a0f020"/></linearGradient></defs><rect x="105.5" y="1044.5" width="29" height="25" rx="1.5" fill="none" stroke="url(#rg1)" stroke-width="1.6"/><path d="M111 1051 L118 1056.5 L111 1062" fill="none" stroke="url(#rg1)" stroke-width="2"/><rect x="119" y="1060.5" width="10" height="3.5" fill="none" stroke="#f06010" stroke-width="1.3"/><g fill="none" stroke="#f01838" stroke-width="1.6"><rect x="155.5" y="1043" width="25" height="11.5" rx="5.75"/><rect x="155.5" y="1058.5" width="25" height="11.5" rx="5.75"/><circle cx="161.3" cy="1048.7" r="5.2"/><circle cx="174.5" cy="1064.3" r="5.2"/><path d="M158.5 1049 L160.5 1051 L164 1046.5 M172.5 1062.3 L176.5 1066.3 M176.5 1062.3 L172.5 1066.3" stroke-width="1.2"/></g><path d="M201.8 1044.5 L211 1044.5 L213 1046.5 L230.5 1046.5 L230.5 1069.5 L201.8 1069.5Z M201.8 1050 H230.5" fill="none" stroke="url(#gg1)" stroke-width="1.7"/><path d="M211 1061 L216 1056.5 L221 1061 V1066 H211Z" fill="none" stroke="#40e020" stroke-width="1.4"/><path d="M271 1041 Q284 1055 276 1066 Q266 1074 256 1068 Q248 1062 250 1053 L252 1046 Q254 1052 258 1050 Q262 1046 266 1052 Q270 1058 264 1062" fill="none" stroke="url(#ff1)" stroke-width="1.7"/><path d="M258 1051 Q262 1055 260 1060 Q262 1063 266 1060" fill="none" stroke="#f07020" stroke-width="1.5"/><g fill="none" stroke="url(#ch1)" stroke-width="1.7"><circle cx="312" cy="1056" r="14"/><circle cx="312" cy="1056" r="5"/><circle cx="312" cy="1056" r="2"/><path d="M312 1051 H325 M307.5 1058.5 L301 1047 M316.5 1058.5 L310 1070"/></g><path d="M346 1049 L356 1049 L354 1045 L364 1046 Q374 1051 375 1060 Q372 1070 361 1070 Q350 1068 352 1060 L345 1062 Q344 1059 348 1056 L350 1054 Z" fill="none" stroke="url(#bl1)" stroke-width="1.5"/><circle cx="362" cy="1058" r="5.5" fill="none" stroke="#909090" stroke-width="1.4"/><circle cx="362" cy="1058" r="3" fill="none" stroke="#2090e0" stroke-width="1.4"/><path d="M396.5 1044.5 H423.5 V1060 Q422 1068 414 1070 H392.5 V1048.5Z" fill="none" stroke="url(#qt1)" stroke-width="1.6"/><text x="396" y="1061" font-family="Liberation Sans" font-size="11.5" fill="#30f020">Qt</text><path d="M411 1069 Q413 1060 423 1057 Q422 1067 411 1069Z" fill="none" stroke="#a0f020" stroke-width="1.3"/><g transform="translate(455.7,1054.8)"><circle r="10.5" fill="#6aaa36"/><path d="M-3.6 -13.5 L3.6 -13.5 L5 -8 L-5 -8Z" fill="#6aaa36" transform="rotate(0)"/><path d="M-3.6 -13.5 L3.6 -13.5 L5 -8 L-5 -8Z" fill="#6aaa36" transform="rotate(60)"/><path d="M-3.6 -13.5 L3.6 -13.5 L5 -8 L-5 -8Z" fill="#6aaa36" transform="rotate(120)"/><path d="M-3.6 -13.5 L3.6 -13.5 L5 -8 L-5 -8Z" fill="#6aaa36" transform="rotate(180)"/><path d="M-3.6 -13.5 L3.6 -13.5 L5 -8 L-5 -8Z" fill="#6aaa36" transform="rotate(240)"/><path d="M-3.6 -13.5 L3.6 -13.5 L5 -8 L-5 -8Z" fill="#6aaa36" transform="rotate(300)"/></g><text x="449" y="1061" font-family="Liberation Sans" font-weight="bold" font-size="15.5" fill="#fff">K</text><circle cx="504" cy="1056" r="14" fill="#4a4a4a"/><g fill="none" stroke="#a8a8a8" stroke-width=".9"><polygon points="504.0,1051.5 507.5,1053.2 508.4,1056.9 506.0,1060.0 502.2,1060.1 499.7,1057.2 500.4,1053.4 503.8,1051.5"/><polygon points="504.0,1047.0 511.0,1050.3 512.8,1057.9 508.1,1064.0 500.3,1064.2 495.3,1058.3 496.7,1050.7 503.5,1047.0"/><polygon points="504.0,1043.5 513.7,1048.1 516.2,1058.6 509.7,1067.1 498.9,1067.4 491.9,1059.2 493.9,1048.7 503.3,1043.5"/><path d="M504 1056 L504.0 1042.5"/><path d="M504 1056 L514.5 1047.5"/><path d="M504 1056 L517.2 1058.8"/><path d="M504 1056 L510.1 1068.0"/><path d="M504 1056 L498.5 1068.3"/><path d="M504 1056 L491.0 1059.5"/><path d="M504 1056 L493.1 1048.1"/><path d="M504 1056 L503.3 1042.5"/></g><path d="M495.5 1058 Q499 1052 503 1057 Q507 1061 513 1054" fill="none" stroke="#e82838" stroke-width="2.4"/><rect x="538" y="1042" width="27.8" height="28" rx="1.5" fill="#7878cc"/><text x="539.5" y="1062" font-family="Liberation Sans" font-weight="bold" font-size="15" fill="#fff">T</text><text x="548" y="1065" font-family="Liberation Sans" font-weight="bold" font-size="13" fill="#fff">E</text><text x="556" y="1062" font-family="Liberation Sans" font-weight="bold" font-size="14" fill="#fff">X</text><rect x="585.8" y="1042" width="28" height="28" fill="#4b4947"/><path d="M589.5 1052.5 L592.5 1060.5 L595.5 1052.5" fill="none" stroke="#a81c3c" stroke-width="2.2"/><path d="M596.5 1060.5 L600 1052.5 L603.8 1059.5 L607.6 1052.5 L611 1060" fill="none" stroke="#c4c4c4" stroke-width="1.9"/><rect x="627" y="1035" width="257" height="20" fill="#385475"/><rect x="627" y="1035" width="257" height="2" fill="#4a86c6"/><rect x="630" y="1037.5" width="16" height="15" fill="#5a5856"/><path d="M632 1043 L634.5 1048 L637 1043" fill="none" stroke="#b01c3c" stroke-width="1.5"/><path d="M636.5 1048 L639 1043 L641 1047.5 L643 1043 L644.5 1047" fill="none" stroke="#d0d0d0" stroke-width="1.2"/><rect x="1309.7" y="1034" width="44.5" height="44" fill="#4a8fd8"/><rect x="1311" y="1034" width="0.6" height="44" fill="#3a78c0" opacity=".7"/><rect x="1313" y="1034" width="0.6" height="44" fill="#3a78c0" opacity=".7"/><rect x="1315" y="1034" width="0.6" height="44" fill="#3a78c0" opacity=".7"/><rect x="1317" y="1034" width="0.6" height="44" fill="#3a78c0" opacity=".7"/><rect x="1319" y="1034" width="0.6" height="44" fill="#3a78c0" opacity=".7"/><rect x="1321" y="1034" width="0.6" height="44" fill="#3a78c0" opacity=".7"/><rect x="1323" y="1034" width="0.6" height="44" fill="#3a78c0" opacity=".7"/><rect x="1325" y="1034" width="0.6" height="44" fill="#3a78c0" opacity=".7"/><rect x="1327" y="1034" width="0.6" height="44" fill="#3a78c0" opacity=".7"/><rect x="1329" y="1034" width="0.6" height="44" fill="#3a78c0" opacity=".7"/><rect x="1331" y="1034" width="0.6" height="44" fill="#3a78c0" opacity=".7"/><rect x="1333" y="1034" width="0.6" height="44" fill="#3a78c0" opacity=".7"/><rect x="1335" y="1034" width="0.6" height="44" fill="#3a78c0" opacity=".7"/><rect x="1337" y="1034" width="0.6" height="44" fill="#3a78c0" opacity=".7"/><rect x="1339" y="1034" width="0.6" height="44" fill="#3a78c0" opacity=".7"/><rect x="1341" y="1034" width="0.6" height="44" fill="#3a78c0" opacity=".7"/><rect x="1343" y="1034" width="0.6" height="44" fill="#3a78c0" opacity=".7"/><rect x="1345" y="1034" width="0.6" height="44" fill="#3a78c0" opacity=".7"/><rect x="1347" y="1034" width="0.6" height="44" fill="#3a78c0" opacity=".7"/><rect x="1349" y="1034" width="0.6" height="44" fill="#3a78c0" opacity=".7"/><rect x="1351" y="1034" width="0.6" height="44" fill="#3a78c0" opacity=".7"/><rect x="1353" y="1034" width="0.6" height="44" fill="#3a78c0" opacity=".7"/><rect x="1309.7" y="1034" width="6" height="1" fill="#2d3136"/><rect x="1320" y="1034" width="16" height="2.5" fill="#2d3136"/><rect x="1359" y="1044.5" width="44" height="33.5" fill="#4a8fd8"/><rect x="1360" y="1044.5" width="0.6" height="33.5" fill="#3a78c0" opacity=".7"/><rect x="1362" y="1044.5" width="0.6" height="33.5" fill="#3a78c0" opacity=".7"/><rect x="1364" y="1044.5" width="0.6" height="33.5" fill="#3a78c0" opacity=".7"/><rect x="1366" y="1044.5" width="0.6" height="33.5" fill="#3a78c0" opacity=".7"/><rect x="1368" y="1044.5" width="0.6" height="33.5" fill="#3a78c0" opacity=".7"/><rect x="1370" y="1044.5" width="0.6" height="33.5" fill="#3a78c0" opacity=".7"/><rect x="1372" y="1044.5" width="0.6" height="33.5" fill="#3a78c0" opacity=".7"/><rect x="1374" y="1044.5" width="0.6" height="33.5" fill="#3a78c0" opacity=".7"/><rect x="1376" y="1044.5" width="0.6" height="33.5" fill="#3a78c0" opacity=".7"/><rect x="1378" y="1044.5" width="0.6" height="33.5" fill="#3a78c0" opacity=".7"/><rect x="1380" y="1044.5" width="0.6" height="33.5" fill="#3a78c0" opacity=".7"/><rect x="1382" y="1044.5" width="0.6" height="33.5" fill="#3a78c0" opacity=".7"/><rect x="1384" y="1044.5" width="0.6" height="33.5" fill="#3a78c0" opacity=".7"/><rect x="1386" y="1044.5" width="0.6" height="33.5" fill="#3a78c0" opacity=".7"/><rect x="1388" y="1044.5" width="0.6" height="33.5" fill="#3a78c0" opacity=".7"/><rect x="1390" y="1044.5" width="0.6" height="33.5" fill="#3a78c0" opacity=".7"/><rect x="1392" y="1044.5" width="0.6" height="33.5" fill="#3a78c0" opacity=".7"/><rect x="1394" y="1044.5" width="0.6" height="33.5" fill="#3a78c0" opacity=".7"/><rect x="1396" y="1044.5" width="0.6" height="33.5" fill="#3a78c0" opacity=".7"/><rect x="1398" y="1044.5" width="0.6" height="33.5" fill="#3a78c0" opacity=".7"/><rect x="1400" y="1044.5" width="0.6" height="33.5" fill="#3a78c0" opacity=".7"/><rect x="1402" y="1044.5" width="0.6" height="33.5" fill="#3a78c0" opacity=".7"/><rect x="1359" y="1044.5" width="8" height="3" fill="#2d3136"/><rect x="1359" y="1077" width="44" height="1.5" fill="#e02020"/><path d="M1418.5 1037.5 V1050.5 M1414.5 1046.5 L1418.5 1050.8 L1422.5 1046.5 M1418.5 1073.5 V1060.5 M1414.5 1064.5 L1418.5 1060.2 L1422.5 1064.5" fill="none" stroke="#eff0f1" stroke-width="1.4"/><rect x="1536.5" y="1046.5" width="17" height="20" rx="2" fill="none" stroke="#eff0f1" stroke-width="1.4"/><rect x="1539.5" y="1049.5" width="11" height="14" rx="1.5" fill="#eff0f1"/><g stroke="#eff0f1" stroke-width="1"><path d="M1539.5 1041 V1046 M1539.5 1067 V1072"/><path d="M1543.5 1041 V1046 M1543.5 1067 V1072"/><path d="M1547.5 1041 V1046 M1547.5 1067 V1072"/><path d="M1551.5 1041 V1046 M1551.5 1067 V1072"/><path d="M1531.5 1050 H1536 M1554 1050 H1558"/><path d="M1531.5 1054 H1536 M1554 1054 H1558"/><path d="M1531.5 1058 H1536 M1554 1058 H1558"/><path d="M1531.5 1062 H1536 M1554 1062 H1558"/></g><circle cx="1590" cy="1052" r="3.5" fill="none" stroke="#eff0f1" stroke-width="1.3"/><path d="M1585 1062.5 Q1583 1062.5 1583.5 1059.5 Q1584 1056 1587.5 1056.5 Q1589 1053 1593 1054 Q1597.5 1055 1597 1059 Q1597.5 1062.5 1595 1062.5Z" fill="#eff0f1"/><rect x="1609.1" y="1046" width="20" height="20" fill="#595755"/><path d="M1611.5 1053 L1614.5 1059.5 L1617.5 1053" fill="none" stroke="#b01c3c" stroke-width="2"/><path d="M1617 1059.5 L1620 1053 L1622.5 1058.5 L1625 1053 L1627 1058" fill="none" stroke="#d0d0d0" stroke-width="1.6"/><path d="M1641 1053 L1645 1056 L1641 1059" fill="none" stroke="#19c3c3" stroke-width="1.5"/><path d="M1646 1062.5 H1651" stroke="#19d080" stroke-width="1.6"/><path d="M1651 1048 V1056 M1648 1053.5 L1651 1056.5 L1654 1053.5" fill="none" stroke="#19d080" stroke-width="1.4"/><circle cx="1675" cy="1052" r="3.6" fill="none" stroke="#dfe0e1" stroke-width="1.2"/><path d="M1667.5 1064 Q1669 1057.5 1675 1057.5" fill="none" stroke="#dfe0e1" stroke-width="1.2"/><circle cx="1680" cy="1061" r="3" fill="none" stroke="#dfe0e1" stroke-width="1.1"/><path d="M1678.5 1061 H1681.5" stroke="#dfe0e1" stroke-width="1"/><rect x="1696" y="1050" width="14" height="14" fill="none" stroke="#eff0f1" stroke-width="1.3"/><rect x="1699" y="1048" width="8" height="4" fill="#eff0f1"/><path d="M1699 1055.5 H1707 M1699 1058.5 H1707 M1699 1061 H1704" stroke="#eff0f1" stroke-width="1"/><path d="M1727 1052 L1735.5 1060 L1731 1064 V1048 L1735.5 1052 L1727 1060" fill="none" stroke="#8a8c8e" stroke-width="1.1"/><g fill="none" stroke="#eff0f1" stroke-width="1.3"><path d="M1749 1053 Q1759 1043.5 1769 1053"/><path d="M1752 1056 Q1759 1049.5 1766 1056"/><path d="M1755 1059 Q1759 1055.5 1763 1059"/></g><circle cx="1759" cy="1062.5" r="1.6" fill="none" stroke="#eff0f1" stroke-width="1.1"/><path d="M1779 1052.5 H1782.5 L1788 1048 V1064 L1782.5 1059.5 H1779Z" fill="#eff0f1"/><path d="M1790.5 1051.5 Q1793 1056 1790.5 1060.5 M1792.5 1049 Q1797 1056 1792.5 1063" fill="none" stroke="#8a8c8e" stroke-width="1.1"/><path d="M1808 1059 L1814 1052.6 L1820.3 1059Z" fill="#eff0f1"/></svg>
<div class="t" style="left:649.9px;top:1038.1px;font-size:14.28px;color:#eff0f1;">Appuyer sur Control_L+Alt_L pour...</div>
<div class="t" style="left:1280.3px;top:1050.7px;font-size:12px;color:#eff0f1;">0</div>
<div class="t" style="left:1300px;width:54px;text-align:right;top:1035.5px;font-size:10.8px;color:#f48a78;text-shadow:1px 0 0 #1a1c20,-1px 0 0 #1a1c20,0 1px 0 #1a1c20,0 -1px 0 #1a1c20">97%</div>
<div class="t" style="left:1300px;width:54px;text-align:right;top:1050.8px;font-size:10.8px;color:#f4f4f4;text-shadow:1px 0 0 #1a1c20,-1px 0 0 #1a1c20,0 1px 0 #1a1c20,0 -1px 0 #1a1c20">2.3GHz</div>
<div class="t" style="left:1350px;width:53.5px;text-align:right;top:1035.5px;font-size:10.8px;color:#f4f4f4;text-shadow:1px 0 0 #1a1c20,-1px 0 0 #1a1c20,0 1px 0 #1a1c20,0 -1px 0 #1a1c20">11.94G</div>
<div class="t" style="left:1350px;width:53.5px;text-align:right;top:1050.8px;font-size:10.8px;color:#f4f4f4;text-shadow:1px 0 0 #1a1c20,-1px 0 0 #1a1c20,0 1px 0 #1a1c20,0 -1px 0 #1a1c20">202M</div>
<div class="t" style="left:1451.4px;top:1035.6px;font-size:18.8px;color:#eff0f1;">0.0 b/s</div>
<div class="t" style="left:1451.4px;top:1055.9px;font-size:18.8px;color:#eff0f1;">0.0 b/s</div>
<div class="t" style="left:1835.3px;top:1039.9px;font-size:30.3px;color:#eff0f1;">14:22</div>
<!--/KDE-->

</body></html>
